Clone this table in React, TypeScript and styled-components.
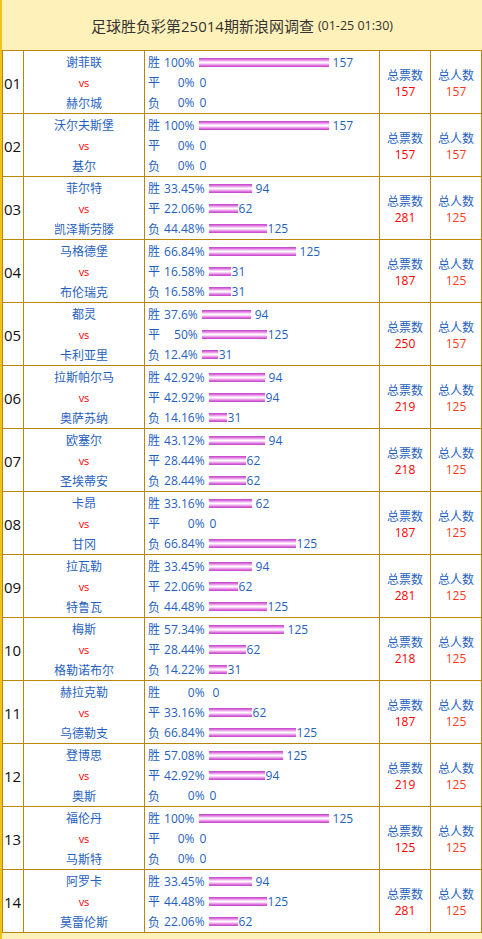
import React from "react";
import styled, { createGlobalStyle } from "styled-components";

const GlobalStyle = createGlobalStyle`
  html, body {
    margin: 0;
    padding: 0;
    background: #ffffff;
  }
  body {
    font-family: "Open Sans", "Noto Sans CJK SC", sans-serif;
    font-size: 12px;
  }
`;

const Page = styled.div`
  width: 480px;
  border-left: 2px solid #f2c21b;
  background: #fff1b9;
  padding-bottom: 6px;
`;

const Header = styled.header`
  height: 50px;
  display: flex;
  align-items: center;
  justify-content: center;
  padding-top: 1px;
  box-sizing: border-box;
  color: #333333;
  font-size: 15px;
`;

const Stamp = styled.span`
  font-size: 12.5px;
  margin-left: 4px;
`;

const Board = styled.div`
  display: grid;
  grid-template-columns: 20px 120px 234px 50px 50px;
  grid-auto-rows: 62px;
  gap: 1px;
  padding: 1px;
  background: #b8860b;
`;

const Cell = styled.div`
  background: #ffffff;
  min-width: 0;
  box-sizing: border-box;
`;

const NoCell = styled(Cell)`
  display: flex;
  align-items: center;
  padding-left: 1px;
  padding-top: 1px;
  font-size: 15px;
  color: #111111;
`;

const TeamCell = styled(Cell)`
  display: grid;
  grid-template-rows: repeat(3, 1fr);
  justify-items: center;
  align-items: center;
  padding-top: 1px;
  color: #1f5fbf;
`;

const Vs = styled.span`
  color: #ff0000;
  font-size: 11px;
`;

const VoteCell = styled(Cell)`
  display: grid;
  grid-template-columns: auto auto 1fr;
  grid-template-rows: repeat(3, 1fr);
  column-gap: 4px;
  align-items: center;
  padding-left: 3px;
  padding-top: 1px;
  color: #1f5fbf;
`;

const Pct = styled.span`
  justify-self: end;
`;

const BarLine = styled.span`
  display: flex;
  align-items: center;
  white-space: nowrap;
`;

const Bar = styled.span`
  display: inline-block;
  height: 9px;
  background: linear-gradient(
    to bottom,
    #c23fc6 0%,
    #d86ad9 15%,
    #eeaaee 30%,
    #fbe6fb 42%,
    #ffffff 50%,
    #fbe6fb 58%,
    #eeaaee 70%,
    #d86ad9 85%,
    #c23fc6 100%
  );
`;

const Count = styled.span<{ $spaced: boolean }>`
  margin-left: ${(p) => (p.$spaced ? "4px" : "1px")};
`;

const TotalCell = styled(Cell)<{ $tone: string }>`
  display: flex;
  flex-direction: column;
  align-items: center;
  justify-content: center;
  padding-top: 3px;
  line-height: 16px;
  color: #1f5fbf;

  b {
    font-weight: normal;
    color: ${(p) => p.$tone};
  }
`;

type Match = {
  home: string;
  away: string;
  votes: [number, number][];
  total: number;
  people: number;
};

const matches: Match[] = [
  { home: "谢菲联", away: "赫尔城", votes: [[100, 157], [0, 0], [0, 0]], total: 157, people: 157 },
  { home: "沃尔夫斯堡", away: "基尔", votes: [[100, 157], [0, 0], [0, 0]], total: 157, people: 157 },
  { home: "菲尔特", away: "凯泽斯劳滕", votes: [[33.45, 94], [22.06, 62], [44.48, 125]], total: 281, people: 125 },
  { home: "马格德堡", away: "布伦瑞克", votes: [[66.84, 125], [16.58, 31], [16.58, 31]], total: 187, people: 125 },
  { home: "都灵", away: "卡利亚里", votes: [[37.6, 94], [50, 125], [12.4, 31]], total: 250, people: 157 },
  { home: "拉斯帕尔马", away: "奥萨苏纳", votes: [[42.92, 94], [42.92, 94], [14.16, 31]], total: 219, people: 125 },
  { home: "欧塞尔", away: "圣埃蒂安", votes: [[43.12, 94], [28.44, 62], [28.44, 62]], total: 218, people: 125 },
  { home: "卡昂", away: "甘冈", votes: [[33.16, 62], [0, 0], [66.84, 125]], total: 187, people: 125 },
  { home: "拉瓦勒", away: "特鲁瓦", votes: [[33.45, 94], [22.06, 62], [44.48, 125]], total: 281, people: 125 },
  { home: "梅斯", away: "格勒诺布尔", votes: [[57.34, 125], [28.44, 62], [14.22, 31]], total: 218, people: 125 },
  { home: "赫拉克勒", away: "乌德勒支", votes: [[0, 0], [33.16, 62], [66.84, 125]], total: 187, people: 125 },
  { home: "登博思", away: "奥斯", votes: [[57.08, 125], [42.92, 94], [0, 0]], total: 219, people: 125 },
  { home: "福伦丹", away: "马斯特", votes: [[100, 125], [0, 0], [0, 0]], total: 125, people: 125 },
  { home: "阿罗卡", away: "莫雷伦斯", votes: [[33.45, 94], [44.48, 125], [22.06, 62]], total: 281, people: 125 },
];

const labels = ["胜", "平", "负"];

function VoteLines({ votes }: { votes: [number, number][] }) {
  return (
    <VoteCell>
      {votes.map(([pct, n], i) => (
        <React.Fragment key={i}>
          <span>{labels[i]}</span>
          <Pct>{pct}%</Pct>
          <BarLine>
            {pct > 0 && <Bar style={{ width: Math.round(pct * 1.3) }} />}
            <Count $spaced={i === 0}>{n}</Count>
          </BarLine>
        </React.Fragment>
      ))}
    </VoteCell>
  );
}

export default function App() {
  return (
    <>
      <GlobalStyle />
      <Page>
        <Header>
          足球胜负彩第25014期新浪网调查<Stamp>(01-25 01:30)</Stamp>
        </Header>
        <Board>
          {matches.map((m, i) => (
            <React.Fragment key={i}>
              <NoCell>{String(i + 1).padStart(2, "0")}</NoCell>
              <TeamCell>
                <span>{m.home}</span>
                <Vs>vs</Vs>
                <span>{m.away}</span>
              </TeamCell>
              <VoteLines votes={m.votes} />
              <TotalCell $tone="#ff0000">
                总票数<b>{m.total}</b>
              </TotalCell>
              <TotalCell $tone="#ff3a1a">
                总人数<b>{m.people}</b>
              </TotalCell>
            </React.Fragment>
          ))}
        </Board>
      </Page>
    </>
  );
}
